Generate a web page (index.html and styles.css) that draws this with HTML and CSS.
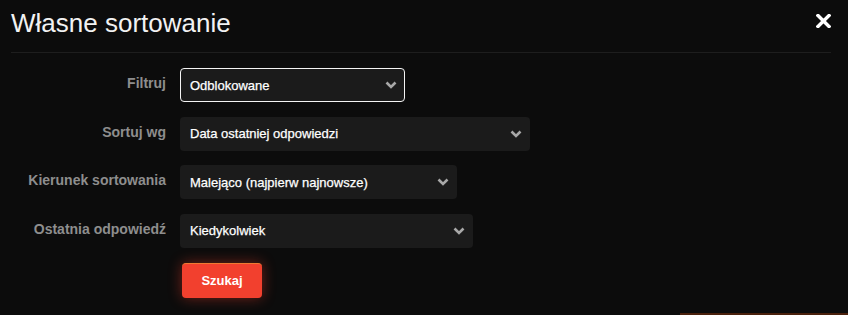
FILE: index.html
```html
<!DOCTYPE html>
<html lang="pl">
<head>
<meta charset="utf-8">
<title>Własne sortowanie</title>
<link rel="stylesheet" href="styles.css">
</head>
<body>
<div class="modal">
  <header class="modal-header">
    <h1 class="modal-title">Własne sortowanie</h1>
    <button class="close-btn" aria-label="Zamknij">
      <svg width="15" height="14" viewBox="0 0 15 14"><path d="M2 1.5 L13 12.5 M13 1.5 L2 12.5" stroke="#fff" stroke-width="3.4" stroke-linecap="square" fill="none"/></svg>
    </button>
  </header>
  <form class="form">
    <label class="label">Filtruj</label>
    <div class="select select-active w-filter">
      <span class="value">Odblokowane</span>
      <svg class="chev" width="12" height="8" viewBox="0 0 12 8"><path d="M1.5 1.5 L6 6 L10.5 1.5" stroke="#a8a8a8" stroke-width="2.6" fill="none"/></svg>
    </div>

    <label class="label">Sortuj wg</label>
    <div class="select w-sort">
      <span class="value">Data ostatniej odpowiedzi</span>
      <svg class="chev" width="12" height="8" viewBox="0 0 12 8"><path d="M1.5 1.5 L6 6 L10.5 1.5" stroke="#a8a8a8" stroke-width="2.6" fill="none"/></svg>
    </div>

    <label class="label">Kierunek sortowania</label>
    <div class="select w-dir">
      <span class="value">Malejąco (najpierw najnowsze)</span>
      <svg class="chev" width="12" height="8" viewBox="0 0 12 8"><path d="M1.5 1.5 L6 6 L10.5 1.5" stroke="#a8a8a8" stroke-width="2.6" fill="none"/></svg>
    </div>

    <label class="label">Ostatnia odpowiedź</label>
    <div class="select w-last">
      <span class="value">Kiedykolwiek</span>
      <svg class="chev" width="12" height="8" viewBox="0 0 12 8"><path d="M1.5 1.5 L6 6 L10.5 1.5" stroke="#a8a8a8" stroke-width="2.6" fill="none"/></svg>
    </div>

    <span></span>
    <div class="actions">
      <button type="button" class="search-btn">Szukaj</button>
    </div>
  </form>
  <div class="bottom-strip"></div>
</div>
</body>
</html>
```

FILE: styles.css
```css
html, body {
  margin: 0;
  padding: 0;
  background: #0c0c0c;
  width: 848px;
  height: 315px;
  overflow: hidden;
}

.modal {
  position: relative;
  height: 315px;
  font-family: "Liberation Sans", Arial, sans-serif;
  color: #fff;
}

.modal-header {
  display: flex;
  align-items: flex-start;
  justify-content: space-between;
  margin: 0 17px 0 11px;
  height: 52px;
  border-bottom: 1px solid #1e1e1e;
}

.modal-title {
  margin: 0;
  padding-top: 8px;
  font-size: 26px;
  font-weight: normal;
  line-height: 30px;
  color: #f2f2f2;
}

.close-btn {
  background: none;
  border: none;
  padding: 0;
  margin: 14px 0 0 0;
  width: 15px;
  height: 14px;
  display: block;
  cursor: pointer;
}
.close-btn svg { display: block; }

.form {
  display: grid;
  grid-template-columns: 166px auto;
  column-gap: 14px;
  row-gap: 14.5px;
  margin-top: 15px;
  justify-items: start;
}

.label {
  justify-self: end;
  padding-top: 7px;
  font-size: 14px;
  font-weight: bold;
  line-height: 16px;
  color: #8e8e8e;
}

.select {
  box-sizing: border-box;
  height: 34px;
  display: flex;
  align-items: center;
  justify-content: space-between;
  padding: 0 7px 0 9px;
  background: #1b1b1b;
  border: 1px solid transparent;
  border-radius: 4px;
  font-size: 13px;
  line-height: 15px;
  color: #fff;
  -webkit-text-stroke: 0.25px #fff;
}

.select-active {
  border-color: #f4f4f4;
}

.w-filter { width: 225px; }
.w-sort { width: 350px; }
.w-dir { width: 277px; }
.w-last { width: 293px; }

.chev { display: block; }

.actions {
  padding-top: 0.5px;
  padding-left: 2px;
}

.search-btn {
  box-sizing: border-box;
  width: 80px;
  height: 35px;
  border: none;
  border-top: 1px solid #f07a32;
  border-radius: 4px;
  background: #f2402e;
  color: #fff;
  font-family: "Liberation Sans", Arial, sans-serif;
  font-size: 13px;
  font-weight: bold;
  box-shadow: 0 0 14px rgba(240, 60, 40, 0.45);
  cursor: pointer;
}

.bottom-strip {
  position: absolute;
  left: 680px;
  right: 0;
  bottom: 0;
  height: 2px;
  background: #4a200c;
}
```
